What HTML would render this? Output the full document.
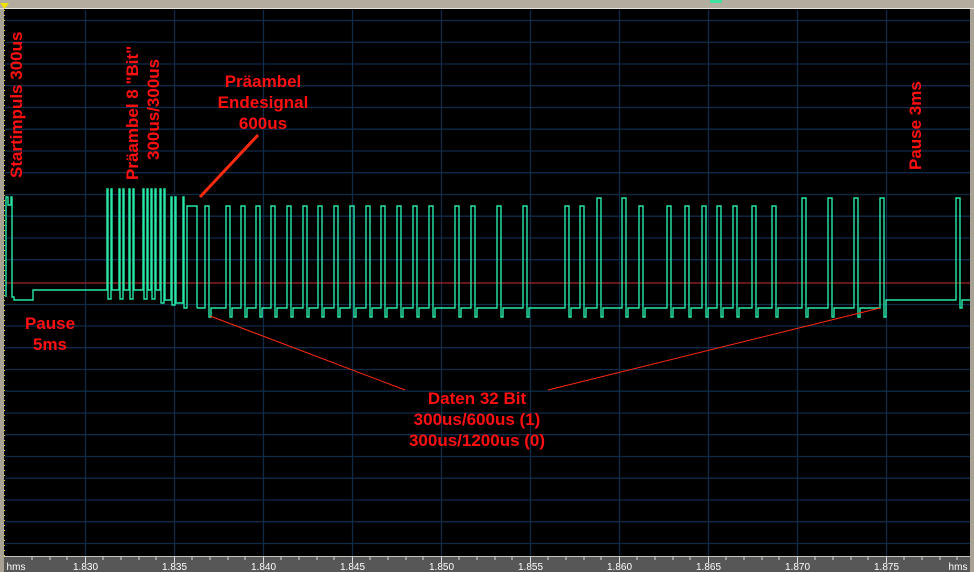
<!DOCTYPE html>
<html><head><meta charset="utf-8"><style>
html,body{margin:0;padding:0;background:#000;width:974px;height:572px;overflow:hidden}
svg{display:block}
.t{font-family:"Liberation Sans",Arial,sans-serif;font-weight:bold;font-size:17px;fill:#ff1010}
.a{font-family:"Liberation Sans",Arial,sans-serif;font-size:10px;fill:#fff}
</style></head><body>
<svg width="974" height="572" xmlns="http://www.w3.org/2000/svg">
<rect width="974" height="572" fill="#000"/>
<g stroke="#0e2b4a" stroke-width="1.3" fill="none">
<path d="M5,20.5H970M5,42.2H970M5,64H970M5,85.7H970M5,107.5H970M5,129.2H970M5,151H970M5,172.7H970M5,194.5H970M5,216.2H970M5,238H970M5,259.7H970M5,304.5H970M5,326H970M5,347.7H970M5,369.5H970M5,391.2H970M5,413H970M5,434.7H970M5,456.5H970M5,478.2H970M5,500H970M5,521.7H970M5,543.5H970"/>
<path d="M85.5,10V557M174.5,10V557M263.5,10V557M352.5,10V557M441.5,10V557M530.5,10V557M619.5,10V557M708.5,10V557M797.5,10V557M886.5,10V557"/>
</g>
<line x1="5" y1="283" x2="970" y2="283" stroke="#a02828" stroke-width="1.3"/>
<g stroke="#28e8a8" stroke-width="1.4" fill="none">
<path d="M6,297 V197 h2 V205 h3 V197 h1 V297 h2 V300 H33 V290 H107 V189 h1 V299 h3 V189 h1 V290 H119 V189 h1 V299 h3 V189 h1 V290 H129 V189 h1 V299 h3 V189 h1 V290 H143 V189 h1 V299 h3 V189 h1 V290 H151 V189 h1 V299 h3 V189 h1 V290 H160 V189 h1 V303 h3 V189 h1 V300 H171 V197 h1 V305 h3 V197 h1 V303 H183 V197 h1 V308 h3 V206 h10 V308"/>
<path d="M197,308 H205 V206 h4 V317 h2 V308 H226 V206 h4 V317 h2 V308 H241 V206 h4 V317 h2 V308 H256 V206 h4 V317 h2 V308 H271 V206 h4 V317 h2 V308 H287 V206 h4 V317 h2 V308 H303 V206 h4 V317 h2 V308 H318 V206 h4 V317 h2 V308 H334 V206 h4 V317 h2 V308 H350 V206 h4 V317 h2 V308 H366 V206 h4 V317 h2 V308 H381 V206 h4 V317 h2 V308 H397 V206 h4 V317 h2 V308 H413 V206 h4 V317 h2 V308 H429 V206 h4 V317 h2 V308 H455 V206 h4 V317 h2 V308 H471 V206 h4 V317 h2 V308 H497 V206 h4 V317 h2 V308 H523 V206 h4 V317 h2 V308 H565 V206 h4 V317 h2 V308 H580 V206 h4 V317 h2 V308 H597 V198 h4 V317 h2 V308 H622 V198 h4 V317 h2 V308 H639 V206 h4 V317 h2 V308 H667 V206 h4 V317 h2 V308 H685 V206 h4 V317 h2 V308 H702 V206 h4 V317 h2 V308 H717 V206 h4 V317 h2 V308 H733 V206 h4 V317 h2 V308 H752 V206 h4 V317 h2 V308 H772 V206 h4 V317 h2 V308 H802 V198 h4 V317 h2 V308 H828 V198 h4 V317 h2 V308 H854 V198 h4 V317 h2 V308 H880 V198 h4 V317 h2 V300 H956 V198 h4 V308 h2 V300 H970"/>
</g>
<g class="t">
<text transform="translate(22,178) rotate(-90)">Startimpuls 300us</text>
<text transform="translate(138,180) rotate(-90)">Präambel 8 "Bit"</text>
<text transform="translate(159,160) rotate(-90)">300us/300us</text>
<text transform="translate(921,170) rotate(-90)">Pause 3ms</text>
<text x="263" y="87" text-anchor="middle">Präambel</text>
<text x="263" y="108" text-anchor="middle">Endesignal</text>
<text x="263" y="129" text-anchor="middle">600us</text>
<text x="50" y="329" text-anchor="middle">Pause</text>
<text x="50" y="350" text-anchor="middle">5ms</text>
<text x="477" y="404" text-anchor="middle">Daten 32 Bit</text>
<text x="477" y="425" text-anchor="middle">300us/600us (1)</text>
<text x="477" y="446" text-anchor="middle">300us/1200us (0)</text>
</g>
<line x1="258" y1="135" x2="200" y2="197" stroke="#ff2a10" stroke-width="3"/>
<line x1="210" y1="316" x2="405" y2="390" stroke="#ff2a10" stroke-width="1"/>
<line x1="548" y1="390" x2="880" y2="308" stroke="#ff2a10" stroke-width="1"/>
<!-- frame -->
<rect x="0" y="0" width="974" height="9" fill="#b3ad9f"/>
<rect x="0" y="8" width="974" height="1" fill="#e8e4dc"/>
<rect x="710" y="0" width="12" height="3" fill="#40e0a0"/>
<rect x="0" y="9" width="4" height="563" fill="#a8a294"/>
<line x1="4.5" y1="10" x2="4.5" y2="556" stroke="#e8d800" stroke-width="1" stroke-dasharray="1,4"/>
<polygon points="0,3 9,3 4.5,9" fill="#f0e000"/>
<rect x="970" y="9" width="4" height="563" fill="#a8a294"/>
<rect x="4" y="556" width="966" height="16" fill="#575757"/>
<rect x="4" y="556" width="966" height="1" fill="#c8c4bc"/>
<g stroke="#ddd" stroke-width="1">
<path d="M32,557v3M50,557v3M67,557v3M103,557v3M121,557v3M139,557v3M156,557v3M192,557v3M210,557v3M228,557v3M245,557v3M281,557v3M299,557v3M317,557v3M334,557v3M370,557v3M388,557v3M406,557v3M423,557v3M459,557v3M477,557v3M495,557v3M512,557v3M548,557v3M566,557v3M584,557v3M601,557v3M637,557v3M655,557v3M673,557v3M690,557v3M726,557v3M744,557v3M762,557v3M779,557v3M815,557v3M833,557v3M851,557v3M868,557v3M904,557v3M922,557v3M940,557v3M957,557v3"/>
<path d="M85.5,557v6M174.5,557v6M263.5,557v6M352.5,557v6M441.5,557v6M530.5,557v6M619.5,557v6M708.5,557v6M797.5,557v6M886.5,557v6"/>
</g>
<g class="a" text-anchor="middle">
<text x="16" y="570">hms</text>
<text x="85.5" y="570">1.830</text><text x="174.5" y="570">1.835</text><text x="263.5" y="570">1.840</text><text x="352.5" y="570">1.845</text><text x="441.5" y="570">1.850</text><text x="530.5" y="570">1.855</text><text x="619.5" y="570">1.860</text><text x="708.5" y="570">1.865</text><text x="797.5" y="570">1.870</text><text x="886.5" y="570">1.875</text>
<text x="958" y="570">hms</text>
</g>
</svg>
</body></html>
